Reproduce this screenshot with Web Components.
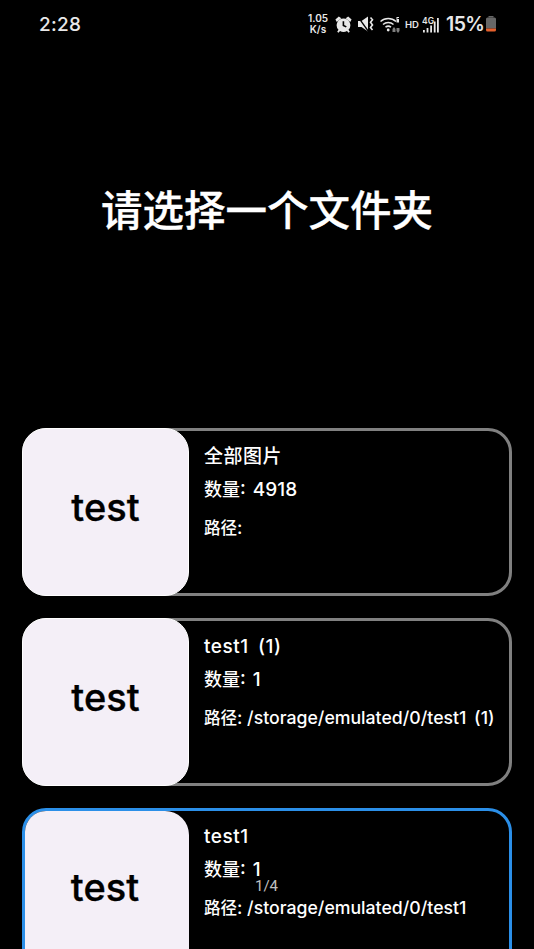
<!DOCTYPE html>
<html lang="zh">
<head>
<meta charset="utf-8">
<title>选择文件夹</title>
<style>
  html, body { margin: 0; height: 100%; background: #000; overflow: hidden; }
  body { font-family: "Inter", "Noto Sans CJK SC", sans-serif; color: #fff; }
</style>
</head>
<body>
<status-bar></status-bar>
<folder-page>
  <folder-card name="全部图片" count="4918" path=""></folder-card>
  <folder-card name="test1 (1)" count="1" path="/storage/emulated/0/test1 (1)"></folder-card>
  <folder-card name="test1" count="1" path="/storage/emulated/0/test1" selected></folder-card>
</folder-page>
<script>
class StatusBar extends HTMLElement {
  constructor() {
    super();
    this.attachShadow({ mode: 'open' });
    this.shadowRoot.innerHTML = `
      <style>
        :host {
          display: flex;
          align-items: center;
          height: 48px;
          padding: 0 37px 0 39px;
          color: #e8e8e8;
          font-family: "Inter", "Liberation Sans", sans-serif;
        }
        .time { font-size: 19px; font-weight: 500; letter-spacing: 0.3px; margin-right: auto; }
        .icons { display: flex; align-items: center; }
        .speed { font-size: 10px; line-height: 11px; font-weight: 600; text-align: center; width: 20px; margin-right: 7px; }
        svg { display: block; fill: #e8e8e8; flex: none; }
        .hd { font-size: 9.5px; font-weight: 600; width: 13px; margin: 0 4px 0 5px; white-space: nowrap; }
        .pct { font-size: 19.5px; font-weight: 600; width: 36px; margin: 0 3px 0 7px; letter-spacing: -0.6px; white-space: nowrap; }
      </style>
      <span class="time">2:28</span>
      <div class="icons">
        <div class="speed">1.05<br>K/s</div>
        <svg width="17" height="17" viewBox="0 0 17 17" style="margin-right:6px">
          <path d="M3.800 .5 6.300 2.300 1.800 6 .4 3.600ZM13.200.5 10.700 2.300l4.500 3.700 1.400-2.400Z"/>
          <path fill-rule="evenodd" d="M8.500 2.400a6.800 6.800 0 0 1 5 11.400l1.300 2-1.300.9-1.500-1.800a6.800 6.800 0 0 1-7 0l-1.500 1.800-1.300-.9 1.300-2A6.800 6.800 0 0 1 8.500 2.400ZM7.600 5.200v4.700l3.300 1.700.8-1.300-2.500-1.300V5.200Z"/>
        </svg>
        <svg width="16" height="16" viewBox="0 0 16 16" style="margin-right:6px">
          <path d="M0 5h3.500L10 .5v15L3.500 11H0Z"/>
          <path d="M0 1 10.500 15.500" stroke="#000" stroke-width="1.300"/>
          <path d="M12.500 1.500l2 2.200-2 2.600 2 2.600-2 2.600 2 2.600" fill="none" stroke="#e8e8e8" stroke-width="1.600"/>
        </svg>
        <svg width="20" height="17" viewBox="0 0 20 17">
          <path d="M.5 5.500a11.500 11.500 0 0 1 15.500 0M3 8.500a8 8 0 0 1 10.500 0M5.500 11.200a4.500 4.500 0 0 1 5.500 0" fill="none" stroke="#e8e8e8" stroke-width="1.500"/>
          <circle cx="8.200" cy="14" r="1.400"/>
          <path d="M16.500 1h2.500v1h-1.600v1h1.600v3.500h-2.500Z"/>
          <path d="M12.500 13l1.500-2 1.500 2v3h-3ZM16.500 15l1.500 2 1.500-2v-3h-3Z" opacity=".55"/>
        </svg>
        <span class="hd">HD</span>
        <svg width="17" height="17" viewBox="0 0 17 17">
          <text x="0" y="8" font-size="8.500" font-weight="600" font-family="Inter, Liberation Sans, sans-serif" fill="#e8e8e8">4G</text>
          <path d="M1 14h1.800v2.500H1ZM4.600 12h1.800v4.500H4.600ZM8.200 9.500H10v7H8.200ZM11.800 5.500h1.800v11h-1.800ZM15 2h1.800v14.500H15Z"/>
        </svg>
        <span class="pct">15%</span>
        <svg width="12" height="16" viewBox="0 0 12 16">
          <path d="M3.500 0h5v1.500h-5Z" fill="#666"/>
          <path d="M1 3a1.500 1.500 0 0 1 1.500-1.500h7A1.500 1.500 0 0 1 11 3V12.500H1Z" fill="#666"/>
          <path d="M1 12.500h10V14a1.500 1.500 0 0 1-1.500 1.500h-7A1.500 1.500 0 0 1 1 14Z" fill="#e5602c"/>
        </svg>
      </div>
    `;
  }
}

class FolderPage extends HTMLElement {
  constructor() {
    super();
    this.attachShadow({ mode: 'open' });
    this.shadowRoot.innerHTML = `
      <style>
        :host { display: block; position: relative; }
        h1 {
          margin: 0;
          padding-top: 136px;
          height: 241px;
          box-sizing: border-box;
          text-align: center;
          font-size: 41.500px;
          line-height: 48px;
          font-weight: 500;
          -webkit-text-stroke: 0.3px #fff;
          font-family: "Noto Sans CJK SC", sans-serif;
        }
        .list { display: flex; flex-direction: column; gap: 22px; padding: 139px 22px 0; }
        .page-no {
          position: absolute;
          left: 255px;
          top: 829px;
          font-family: "Roboto", sans-serif;
          font-size: 15px;
          line-height: 18px;
          color: #c0c0c0;
        }
      </style>
      <h1>请选择一个文件夹</h1>
      <div class="list"><slot></slot></div>
      <span class="page-no">1/4</span>
    `;
  }
}

class FolderCard extends HTMLElement {
  static get observedAttributes() {
    return ['name', 'count', 'path', 'selected'];
  }

  constructor() {
    super();
    this.attachShadow({ mode: 'open' });
  }

  connectedCallback() {
    this.render();
  }

  attributeChangedCallback() {
    this.render();
  }

  render() {
    const name = this.getAttribute('name') || '';
    const count = this.getAttribute('count') || '0';
    const path = this.getAttribute('path') || '';
    this.shadowRoot.innerHTML = `
      <style>
        :host {
          display: flex;
          height: 168px;
          box-sizing: border-box;
          border: 3px solid #808080;
          border-radius: 24px;
          font-family: "Inter", "Noto Sans CJK SC", sans-serif;
          font-size: 17.700px;
          font-weight: 500;
          color: #fff;
        }
        :host([selected]) { border-color: #2b8fe8; }
        .thumb {
          flex: none;
          width: 167px;
          height: 168px;
          margin: -3px 0 -3px -3px;
          padding-bottom: 10px;
          box-sizing: border-box;
          background: #f4eff7;
          border-radius: 24px;
          color: #000;
          font-size: 38px;
          font-weight: 500;
          -webkit-text-stroke: 0.3px #000;
          display: flex;
          align-items: center;
          justify-content: center;
        }
        :host(:not([selected])) .thumb { border: 1px solid #fff; }
        :host([selected]) .thumb {
          margin: 0;
          width: 164px;
          height: 165px;
          padding: 0 4px 14px 0;
          border-radius: 21px 24px 24px 21px;
        }
        .info { padding: 15px 0 0 15px; min-width: 0; white-space: nowrap; }
        .line { line-height: 22px; }
        .name { font-size: 19px; letter-spacing: 0.5px; word-spacing: 4px; }
        .count { font-size: 19px; margin-top: 11px; word-spacing: 2px; }
        .count .cjk { font-size: 18px; }
        .path { margin-top: 16px; }
        .path .cjk { font-size: 16.500px; }
        .path .value { word-spacing: 3px; }
      </style>
      <div class="thumb">test</div>
      <div class="info">
        <div class="line name">${name}</div>
        <div class="line count"><span class="cjk">数量</span>: ${count}</div>
        <div class="line path"><span class="cjk">路径</span>: <span class="value">${path}</span></div>
      </div>
    `;
  }
}

customElements.define('status-bar', StatusBar);
customElements.define('folder-page', FolderPage);
customElements.define('folder-card', FolderCard);
</script>
</body>
</html>
